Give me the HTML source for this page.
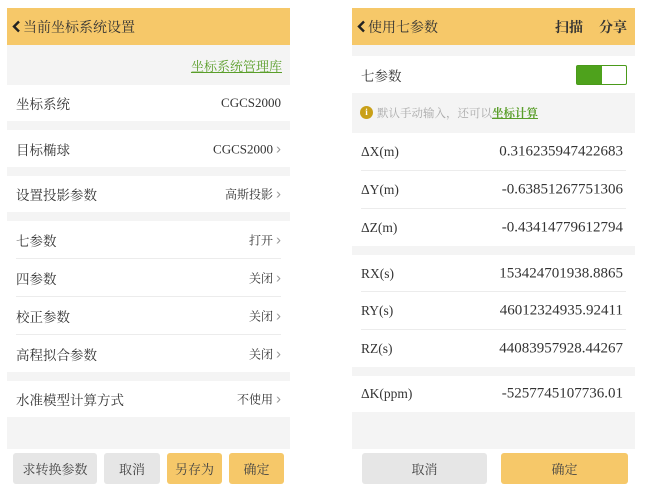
<!DOCTYPE html><html><head><meta charset="utf-8"><style>
*{margin:0;padding:0;box-sizing:border-box}
body{width:645px;height:504px;background:#fff;position:relative;overflow:hidden;font-family:"Liberation Serif","Noto Serif CJK SC",serif;color:#333}
.p{position:absolute;top:8px;width:283px;height:488px;background:#fff}
.bg{position:absolute;left:0;top:37px;width:100%;height:404px;background:#f4f4f4}
.hd{position:absolute;left:0;top:0;width:100%;height:37px;background:#f6c869;font-size:14px;color:#333}
.hd svg{position:absolute;left:5px;top:12px}
.r{position:absolute;left:0;width:100%;background:#fff;font-size:13.5px}
.r .l{position:absolute;left:9px;top:50%;transform:translateY(-50%)}
.r .v{position:absolute;right:9px;top:50%;transform:translateY(-50%);font-size:12px}
.r.sep:after{content:"";position:absolute;left:9px;right:9px;bottom:0;height:1px;background:#ececec}
.ch{color:#999;font-size:15px;margin-left:3px;font-family:"Liberation Sans",sans-serif}
.b{position:absolute;top:445px;height:31px;border-radius:3px;font-size:13px;display:flex;align-items:center;justify-content:center}
.g{background:#e6e6e6;color:#444}.y{background:#f6c869;color:#444}
.num{font-size:15px !important;right:12px !important}
</style></head><body>
<div class="p" style="left:7px">
 <div class="bg"></div>
 <div class="hd"><svg width="9" height="13" viewBox="0 0 9 13"><path d="M7 1.5L2 6.5L7 11.5" stroke="#222" stroke-width="2.4" fill="none"/></svg><span style="position:absolute;left:16px;top:9px">当前坐标系统设置</span></div>
 <div style="position:absolute;right:8px;top:48px;font-size:13px;color:#5a9e2a;text-decoration:underline">坐标系统管理库</div>
 <div class="r" style="top:77px;height:36px"><span class="l">坐标系统</span><span class="v" style="font-size:13px">CGCS2000</span></div>
 <div class="r" style="top:122px;height:37px"><span class="l">目标椭球</span><span class="v" style="font-size:13px">CGCS2000<span class="ch">›</span></span></div>
 <div class="r" style="top:168px;height:36px"><span class="l">设置投影参数</span><span class="v">高斯投影<span class="ch">›</span></span></div>
 <div class="r sep" style="top:213px;height:38px"><span class="l">七参数</span><span class="v">打开<span class="ch">›</span></span></div>
 <div class="r sep" style="top:251px;height:38px"><span class="l">四参数</span><span class="v">关闭<span class="ch">›</span></span></div>
 <div class="r sep" style="top:289px;height:38px"><span class="l">校正参数</span><span class="v">关闭<span class="ch">›</span></span></div>
 <div class="r" style="top:327px;height:37px"><span class="l">高程拟合参数</span><span class="v">关闭<span class="ch">›</span></span></div>
 <div class="r" style="top:373px;height:36px"><span class="l">水准模型计算方式</span><span class="v">不使用<span class="ch">›</span></span></div>
 <div class="b g" style="left:6px;width:84px">求转换参数</div>
 <div class="b g" style="left:97px;width:56px">取消</div>
 <div class="b y" style="left:160px;width:55px">另存为</div>
 <div class="b y" style="left:222px;width:55px">确定</div>
</div>
<div class="p" style="left:352px">
 <div class="bg"></div>
 <div class="hd"><svg width="9" height="13" viewBox="0 0 9 13"><path d="M7 1.5L2 6.5L7 11.5" stroke="#222" stroke-width="2.4" fill="none"/></svg><span style="position:absolute;left:16px;top:9px">使用七参数</span><span style="position:absolute;left:203px;top:9px;font-weight:bold">扫描</span><span style="position:absolute;left:247px;top:9px;font-weight:bold">分享</span></div>
 <div class="r" style="top:48px;height:37px"><span class="l">七参数</span><div style="position:absolute;left:224px;top:9px;width:51px;height:20px;border:1px solid #4a9a1a;border-radius:2px;background:#fff"><div style="width:25px;height:18px;background:#4ea21c"></div></div></div>
 <div style="position:absolute;left:8px;top:98px;width:13px;height:13px;border-radius:50%;background:#c9a018;color:#fff;font-size:9px;text-align:center;line-height:13px;font-weight:bold">i</div>
 <div style="position:absolute;left:25px;top:97px;font-size:11.5px;color:#aaa">默认手动输入，还可以<span style="color:#5a9e2a;text-decoration:underline;font-weight:bold">坐标计算</span></div>
 <div class="r sep" style="top:125px;height:38px"><span class="l">ΔX(m)</span><span class="v num">0.316235947422683</span></div>
 <div class="r sep" style="top:163px;height:38px"><span class="l">ΔY(m)</span><span class="v num">-0.63851267751306</span></div>
 <div class="r" style="top:201px;height:37px"><span class="l">ΔZ(m)</span><span class="v num">-0.43414779612794</span></div>
 <div class="r sep" style="top:247px;height:37px"><span class="l">RX(s)</span><span class="v num">153424701938.8865</span></div>
 <div class="r sep" style="top:284px;height:38px"><span class="l">RY(s)</span><span class="v num">46012324935.92411</span></div>
 <div class="r" style="top:322px;height:37px"><span class="l">RZ(s)</span><span class="v num">44083957928.44267</span></div>
 <div class="r" style="top:368px;height:36px"><span class="l">ΔK(ppm)</span><span class="v num">-5257745107736.01</span></div>
 <div class="b g" style="left:10px;width:125px">取消</div>
 <div class="b y" style="left:149px;width:127px">确定</div>
</div>
</body></html>
